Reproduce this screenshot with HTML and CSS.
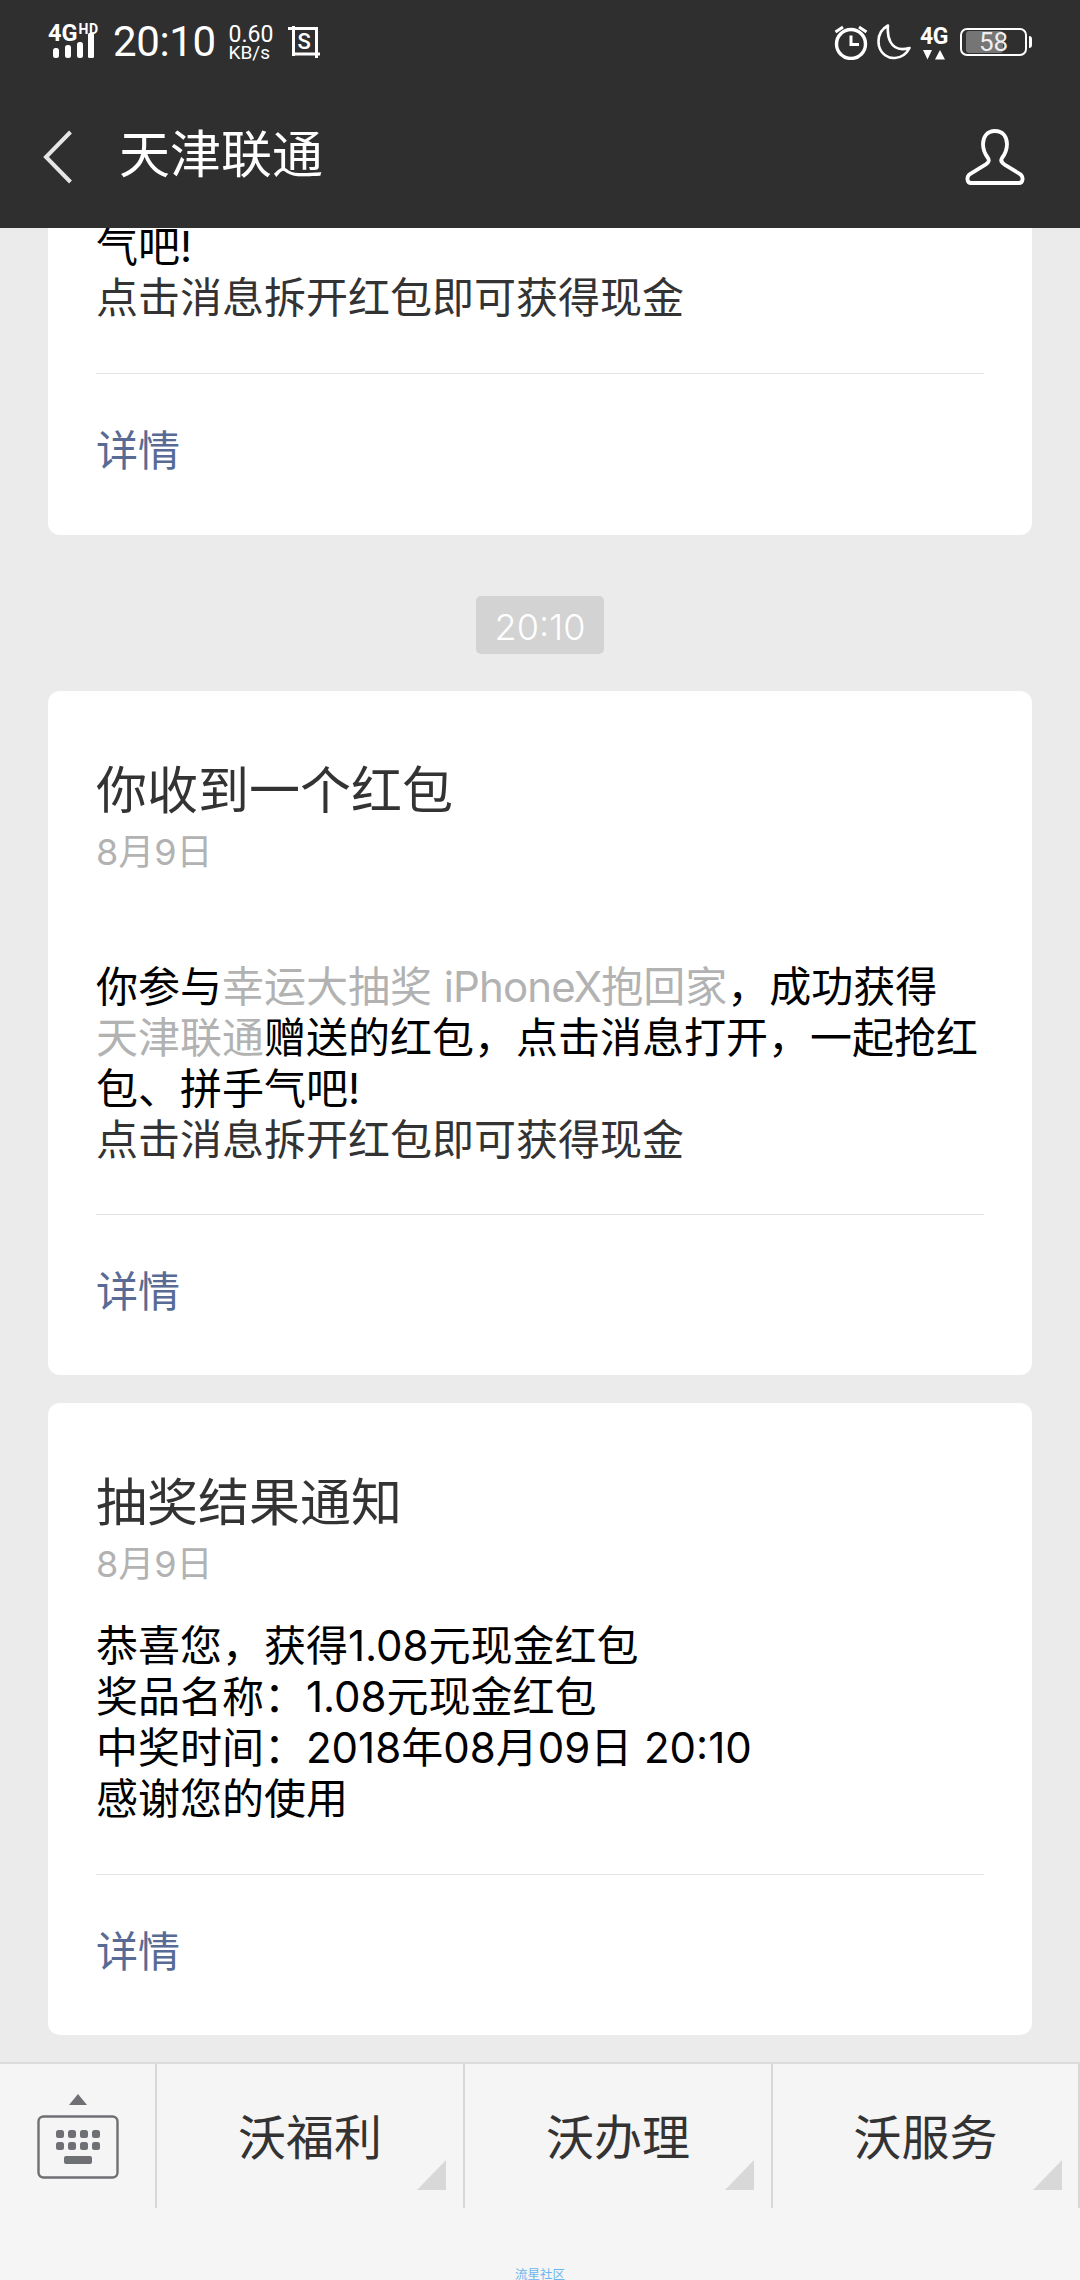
FILE: index.html
```html
<!DOCTYPE html>
<html lang="zh-CN">
<head>
<meta charset="utf-8">
<title>天津联通</title>
<link rel="stylesheet" href="styles.css">
</head>
<body>
<div class="screen">
  <header class="topbar">
    <div class="status">
      <div class="status-left">
        <div class="net">
          <div class="net-label"><span class="net-4g">4G</span><span class="net-hd">HD</span></div>
          <svg class="net-bars" width="46" height="25" viewBox="0 0 46 25"><rect x="2" y="15" width="6" height="10" rx="2.5"/><rect x="14" y="12" width="6" height="13" rx="2.5"/><rect x="26" y="9" width="6" height="16" rx="2.5"/><rect x="37" y="0" width="6" height="25" rx="1.5"/></svg>
        </div>
        <span class="clock">20:10</span>
        <div class="speed"><span class="speed-num">0.60</span><span class="speed-unit">KB/s</span></div>
        <div class="shot"><svg class="shot-frame" width="32" height="32" viewBox="0 0 32 32"><path d="M0 2.500H30M5.500 0V30M4 28H32M28.500 1V32" fill="none" stroke="#fff" stroke-width="3"/></svg><span class="shot-s">S</span></div>
      </div>
      <div class="status-right">
        <svg width="34" height="36" viewBox="0 0 34 36"><circle cx="17" cy="20" r="14.500" fill="none" stroke="#fff" stroke-width="3.400"/><path d="M17 11.500V20.500H25" fill="none" stroke="#fff" stroke-width="3"/><path d="M1.500 8L9 3M32.500 8L25 3" fill="none" stroke="#fff" stroke-width="3"/></svg>
        <svg width="34" height="36" viewBox="0 0 34 36"><path d="M11 1.500C3 6 0.500 14 2 22C4 30 11 34.500 18 34C25 33.500 30 29 32.500 24C24 26.500 17 24.500 13.500 18C10.500 12.500 10.500 7 11 1.500Z" fill="none" stroke="#fff" stroke-width="2.600" stroke-linejoin="round"/></svg>
        <div class="lte">
          <span class="lte-label">4G</span>
          <svg width="22" height="10" viewBox="0 0 22 10"><path d="M0 0H9L4.500 9.500Z M12 9.500L17 0L22 9.500Z" fill="#fff"/></svg>
        </div>
        <div class="battery"><div class="battery-body"><span class="battery-fill"></span><span class="battery-num">58</span></div><span class="battery-nub"></span></div>
      </div>
    </div>
    <div class="navbar">
      <div class="nav-left">
        <svg class="back" width="32" height="54" viewBox="0 0 32 54"><path d="M27.500 2L3 27L27.500 52" fill="none" stroke="#e6e6e6" stroke-width="4"/></svg>
        <h1 class="nav-title">天津联通</h1>
      </div>
      <svg class="person" width="60" height="56" viewBox="0 0 60 56"><path d="M30 2C22 2 18 8 18 15C18 21 20 25 23 29C25 32 23 34 20 36L5 45C1 48 2 54 6 54H54C58 54 59 48 55 45L40 36C37 34 35 32 37 29C40 25 42 21 42 15C42 8 38 2 30 2Z" fill="none" stroke="#fff" stroke-width="3.800"/></svg>
    </div>
  </header>

  <main class="feed">
    <article class="card card-clipped">
      <p class="body">气吧!<br><span class="note">点击消息拆开红包即可获得现金</span></p>
      <div class="more">详情</div>
    </article>

    <div class="stamp-row"><span class="stamp">20:10</span></div>

    <article class="card">
      <h2 class="title">你收到一个红包</h2>
      <div class="date">8月9日</div>
      <p class="body body-gap">你参与<span class="link">幸运大抽奖 <span class="model">iPhoneX</span>抱回家</span>，成功获得<span class="link">天津联通</span>赠送的红包，点击消息打开，一起抢红包、拼手气吧!<br><span class="note">点击消息拆开红包即可获得现金</span></p>
      <div class="more">详情</div>
    </article>

    <article class="card card-next">
      <h2 class="title">抽奖结果通知</h2>
      <div class="date">8月9日</div>
      <p class="body">恭喜您，获得1.08元现金红包<br>奖品名称：1.08元现金红包<br>中奖时间：2018年08月09日 20:10<br>感谢您的使用</p>
      <div class="more">详情</div>
    </article>
  </main>

  <footer class="menu">
    <div class="menu-row">
      <div class="kbd">
        <svg width="82" height="86" viewBox="0 0 82 86"><path d="M32 12L41 1L50 12Z" fill="#6f7074"/><rect x="1.500" y="23.500" width="79" height="61" rx="5" fill="none" stroke="#6f7074" stroke-width="2.400"/><g fill="#6f7074"><rect x="19" y="37" width="8" height="8" rx="2.500"/><rect x="31" y="37" width="8" height="8" rx="2.500"/><rect x="43" y="37" width="8" height="8" rx="2.500"/><rect x="55" y="37" width="8" height="8" rx="2.500"/><rect x="19" y="49" width="8" height="8" rx="2.500"/><rect x="31" y="49" width="8" height="8" rx="2.500"/><rect x="43" y="49" width="8" height="8" rx="2.500"/><rect x="55" y="49" width="8" height="8" rx="2.500"/><rect x="27" y="63" width="28" height="8" rx="2"/></g></svg>
      </div>
      <div class="menu-item">沃福利<span class="corner"></span></div>
      <div class="menu-item">沃办理<span class="corner"></span></div>
      <div class="menu-item">沃服务<span class="corner"></span></div>
    </div>
    <div class="mark">流星社区</div>
  </footer>
</div>
</body>
</html>
```

FILE: styles.css
```css
* { box-sizing: border-box; }
html, body { margin: 0; padding: 0; }
body { background: #ebebeb; font-family: Inter, "Noto Sans CJK SC", sans-serif; color: #000; }
.screen { width: 1080px; height: 2280px; display: flex; flex-direction: column; overflow: hidden; }

.topbar { height: 228px; background: #2f2f2f; color: #fff; flex: none; position: relative; z-index: 1; }
.status { height: 82px; padding: 24px 48px 0 48px; display: flex; justify-content: space-between; align-items: flex-start; }
.status-left { display: flex; align-items: flex-start; }
.status-right { display: flex; align-items: flex-start; gap: 9px; }
.net { width: 52px; height: 36px; position: relative; }
.net-label { display: flex; align-items: flex-start; line-height: 1; }
.net-4g { font: 700 23.500px/18px Roboto, sans-serif; }
.net-hd { font: 700 14px/10px Roboto, sans-serif; letter-spacing: 0.500px; margin-left: 1px; }
.net-bars { display: block; margin: -9px 0 0 3px; fill: #fff; }
.clock { font: 400 42px/36px Roboto, sans-serif; margin-left: 13px; letter-spacing: -0.400px; }
.speed { margin-left: 13px; display: flex; flex-direction: column; }
.speed-num { font: 400 23px/21px Roboto, sans-serif; }
.speed-unit { font: 400 19px/16px Roboto, sans-serif; }
.shot { margin: 2px 0 0 15px; width: 32px; height: 32px; position: relative; }
.shot-frame { display: block; }
.shot-s { position: absolute; left: 9px; top: 5px; font: 500 22px/22px Roboto, sans-serif; }
.status-right svg { display: block; }
.lte { display: flex; flex-direction: column; align-items: center; width: 28px; margin-top: 3px; }
.lte-label { font: 700 23px/19px Roboto, sans-serif; letter-spacing: -0.500px; }
.lte svg { margin-top: 4px; }
.battery { display: flex; align-items: center; margin: 4px 0 0 3px; height: 28px; }
.battery-body { width: 67px; height: 28px; border: 2px solid #fff; border-radius: 7px; position: relative; margin-right: 2px; }
.battery-fill { position: absolute; left: 4px; top: 1px; bottom: 1px; width: 37px; background: #757575; border-radius: 3px; }
.battery-num { position: absolute; left: 0; right: 0; top: 0; text-align: center; font: 400 26px/25px Roboto, sans-serif; color: #eee; }
.battery-nub { width: 3px; height: 12px; background: #fff; border-radius: 0 3px 3px 0; }

.navbar { height: 146px; padding: 3px 55px 0 43px; display: flex; justify-content: space-between; align-items: center; }
.nav-left { display: flex; align-items: center; gap: 44px; }
.back { display: block; }
.nav-title { margin: 0 0 11px; font: 400 51px/60px "Noto Sans CJK SC", sans-serif; color: #fff; }
.person { display: block; }

.feed { flex: 1; min-height: 0; overflow: hidden; padding: 0 48px; }
.card { background: #fff; border-radius: 12px; padding: 66px 48px 0; }
.card-clipped { padding-top: 0; margin-top: -7px; border-radius: 0 0 12px 12px; }
.card-next { margin-top: 28px; }
.title { margin: 0; font: 400 51px/60px "Noto Sans CJK SC", sans-serif; color: #333; }
.date { margin-top: 10px; font: 400 36px/50px Inter, "Noto Sans CJK SC", sans-serif; color: #b2b2b2; }
.body { margin: 31px 0 0; font: 400 42px/51px Inter, "Noto Sans CJK SC", sans-serif; color: #000; }
.card-clipped .body { margin-top: 0; }
.card .body-gap { margin-top: 84px; }
.note { color: #333; }
.link { color: #b2b2b2; white-space: nowrap; }
.model { letter-spacing: -0.900px; }
.more { margin-top: 49px; border-top: 1px solid #e3e3e3; height: 161px; padding-top: 46px; font: 400 42px/56px "Noto Sans CJK SC", sans-serif; color: #576b95; }
.card-clipped .more { margin-top: 50px; height: 162px; }
.card-next .more { margin-top: 50px; }
.stamp-row { display: flex; justify-content: center; margin: 61px 0 37px; }
.stamp { width: 128px; height: 58px; background: #d3d3d3; border-radius: 5px; color: #fff; font: 300 36px/62px Inter, sans-serif; text-align: center; }

.menu { height: 218px; flex: none; background: #f5f5f5; border-top: 2px solid #dcdcdc; display: flex; flex-direction: column; }
.menu-row { display: flex; height: 144px; flex: none; }
.kbd { width: 155px; padding: 29px 0 0 37px; flex: none; }
.kbd svg { display: block; }
.menu-item { width: 308px; flex: none; border-left: 2px solid #d8d8d8; position: relative; text-align: center; font: 400 48px/140px "Noto Sans CJK SC", sans-serif; color: #333; }
.menu-item:last-child { width: 309px; border-right: 2px solid #d8d8d8; }
.corner { position: absolute; right: 17px; bottom: 18px; width: 0; height: 0; border-style: solid; border-width: 0 0 30px 29px; border-color: transparent transparent #d8d8d8 transparent; }
.menu-item:last-child .corner { right: 16px; }
.mark { margin-top: 59px; text-align: center; font: 400 12.500px/14px "Noto Sans CJK SC", sans-serif; color: #6db5ee; }
```
